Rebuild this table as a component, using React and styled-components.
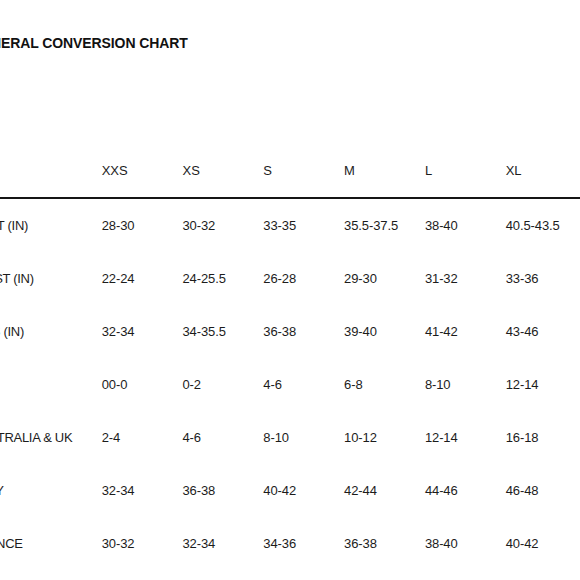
import React from "react";
import styled, { createGlobalStyle } from "styled-components";

const GlobalStyle = createGlobalStyle`
  html, body {
    margin: 0;
    padding: 0;
    background: #ffffff;
    overflow: hidden;
  }
  body {
    font-family: "Liberation Sans", Arial, sans-serif;
    color: #1c1c1c;
  }
`;

const sizes = ["XXS", "XS", "S", "M", "L", "XL"];

const rows = [
  { label: "BUST (IN)", values: ["28-30", "30-32", "33-35", "35.5-37.5", "38-40", "40.5-43.5"] },
  { label: "WAIST (IN)", values: ["22-24", "24-25.5", "26-28", "29-30", "31-32", "33-36"] },
  { label: "HIPS (IN)", values: ["32-34", "34-35.5", "36-38", "39-40", "41-42", "43-46"] },
  { label: "US", values: ["00-0", "0-2", "4-6", "6-8", "8-10", "12-14"] },
  { label: "AUSTRALIA & UK", values: ["2-4", "4-6", "8-10", "10-12", "12-14", "16-18"] },
  { label: "ITALY", values: ["32-34", "36-38", "40-42", "42-44", "44-46", "46-48"] },
  { label: "FRANCE", values: ["30-32", "32-34", "34-36", "36-38", "38-40", "40-42"] },
];

// the screenshot is a crop of a wider chart, so the sheet starts left of the window
const Sheet = styled.div`
  margin-left: -29px;
  padding-top: 35px;
  width: 620px;
`;

const Title = styled.h2`
  margin: 0 0 110px;
  font-size: 14px;
  line-height: 16px;
  font-weight: 700;
  letter-spacing: -0.1px;
  color: #111;
`;

const Grid = styled.div`
  display: grid;
  grid-template-columns: 130.7px repeat(6, 80.8px);
`;

const HeaderRow = styled.div`
  display: contents;
`;

const HeadCell = styled.div`
  font-size: 13px;
  line-height: 20px;
  padding: 0 0 16px;
  border-bottom: 2px solid #151515;
`;

const Row = styled.div`
  display: contents;
`;

const Cell = styled.div`
  height: 53px;
  display: flex;
  align-items: center;
  font-size: 13px;
  line-height: 20px;
  letter-spacing: ${(p) => (p.$label ? "-0.3px" : "-0.1px")};
  white-space: nowrap;
`;

export default function App() {
  return (
    <>
      <GlobalStyle />
      <Sheet>
        <Title>GENERAL CONVERSION CHART</Title>
        <Grid>
          <HeaderRow>
            <HeadCell />
            {sizes.map((s) => (
              <HeadCell key={s}>{s}</HeadCell>
            ))}
          </HeaderRow>
          {rows.map((r) => (
            <Row key={r.label}>
              <Cell $label>{r.label}</Cell>
              {r.values.map((v, i) => (
                <Cell key={i}>{v}</Cell>
              ))}
            </Row>
          ))}
        </Grid>
      </Sheet>
    </>
  );
}
